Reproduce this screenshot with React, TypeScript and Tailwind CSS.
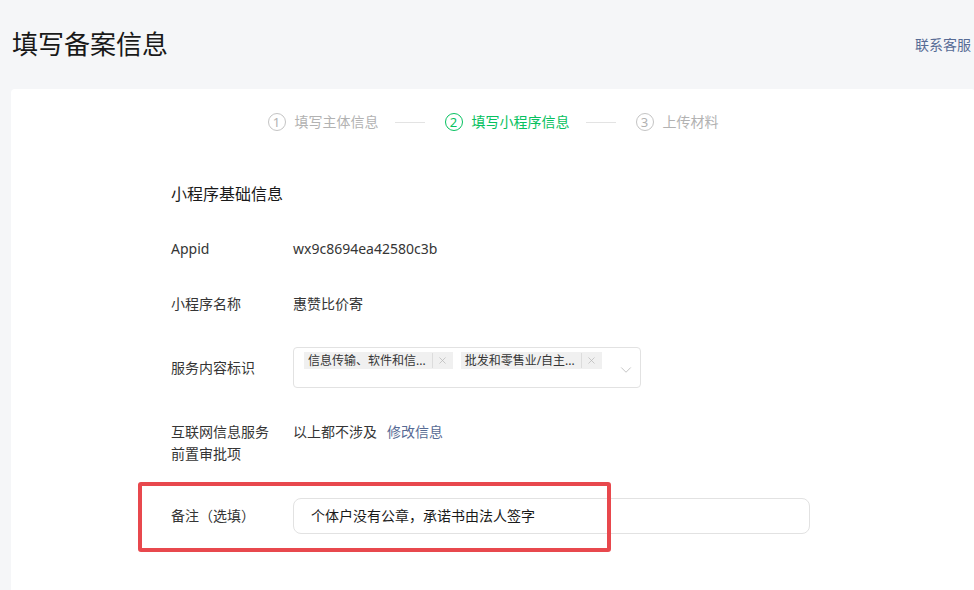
import { X, ChevronDown } from "lucide-react";

const font = { fontFamily: '"Noto Sans", "Noto Sans CJK SC", sans-serif' };

function Step({ n, label, active }: { n: number; label: string; active?: boolean }) {
  const color = active ? "text-[#07c160] border-[#07c160]" : "text-[#b2b2b2] border-[#c4c4c4]";
  return (
    <div className={`flex items-center gap-[9px] ${active ? "text-[#07c160]" : "text-[#b2b2b2]"}`}>
      <span className={`w-[18px] h-[18px] rounded-full border flex items-center justify-center text-[13px] leading-none ${color}`}>
        {n}
      </span>
      <span className="text-[14px] leading-[20px]">{label}</span>
    </div>
  );
}

function Tag({ text }: { text: string }) {
  return (
    <div className="flex items-center h-[17px] bg-[#f0f0f0] pl-[4px] pr-[5px]">
      <span className="text-[12px] leading-[17px] text-[#353535]">{text}</span>
      <span className="w-px h-[15px] bg-[#dcdcdc] ml-[6px] mr-[4px]" />
      <X className="w-[11px] h-[11px] text-[#b5b5b5]" strokeWidth={1.5} />
    </div>
  );
}

export default function App() {
  return (
    <div className="w-[974px] h-[590px] overflow-hidden bg-[#f5f6f8] text-[#1a1a1a]" style={font}>
      <div className="flex items-center justify-between pl-[12px] pr-[3px] pt-[26px] h-[89px] pb-[27px]">
        <h1 className="text-[26px] leading-[36px] font-normal text-[#191919]">填写备案信息</h1>
        <a className="text-[14px] text-[#576b95]">联系客服</a>
      </div>

      <div className="ml-[11px] w-[964px] h-[520px] bg-white rounded-[4px]">
        <div className="flex items-center justify-center pt-[23px]">
          <Step n={1} label="填写主体信息" />
          <span className="w-[30px] h-px bg-[#e3e3e3] ml-[16px] mr-[20px]" />
          <Step n={2} label="填写小程序信息" active />
          <span className="w-[30px] h-px bg-[#e3e3e3] ml-[16px] mr-[20px]" />
          <Step n={3} label="上传材料" />
        </div>

        <div className="pl-[160px] pt-[50px] text-[14px] leading-[22px] text-[#353535]">
          <h2 className="text-[16px] leading-[24px] text-[#1a1a1a] font-normal">小程序基础信息</h2>

          <div className="flex mt-[32px]">
            <div className="w-[122px]">Appid</div>
            <div>wx9c8694ea42580c3b</div>
          </div>

          <div className="flex mt-[33px]">
            <div className="w-[122px]">小程序名称</div>
            <div>惠赞比价寄</div>
          </div>

          <div className="flex items-center mt-[32px]">
            <div className="w-[122px]">服务内容标识</div>
            <div className="w-[348px] h-[41px] border border-[#e2e2e2] rounded-[4px] flex items-start pt-[4px] pl-[10px] pr-[8px] relative">
              <div className="flex gap-[8px]">
                <Tag text="信息传输、软件和信..." />
                <Tag text="批发和零售业/自主..." />
              </div>
              <ChevronDown className="absolute right-[5px] top-[13px] w-[18px] h-[18px] text-[#b0b0b0]" strokeWidth={1} />
            </div>
          </div>

          <div className="flex mt-[33px]">
            <div className="w-[122px]">
              互联网信息服务
              <br />
              前置审批项
            </div>
            <div className="flex gap-[10px]">
              <span>以上都不涉及</span>
              <a className="text-[#576b95]">修改信息</a>
            </div>
          </div>

          <div className="flex items-center mt-[33px] relative">
            <div className="w-[122px]">备注（选填）</div>
            <div className="w-[517px] h-[36px] border border-[#e2e2e2] rounded-[8px] flex items-center pl-[17px] text-[#1a1a1a]">
              个体户没有公章，承诺书由法人签字
            </div>
            <div className="absolute left-[-33px] top-[-16px] w-[473px] h-[70px] border-[4px] border-[#e8484d] rounded-[3px]" />
          </div>
        </div>
      </div>
    </div>
  );
}
